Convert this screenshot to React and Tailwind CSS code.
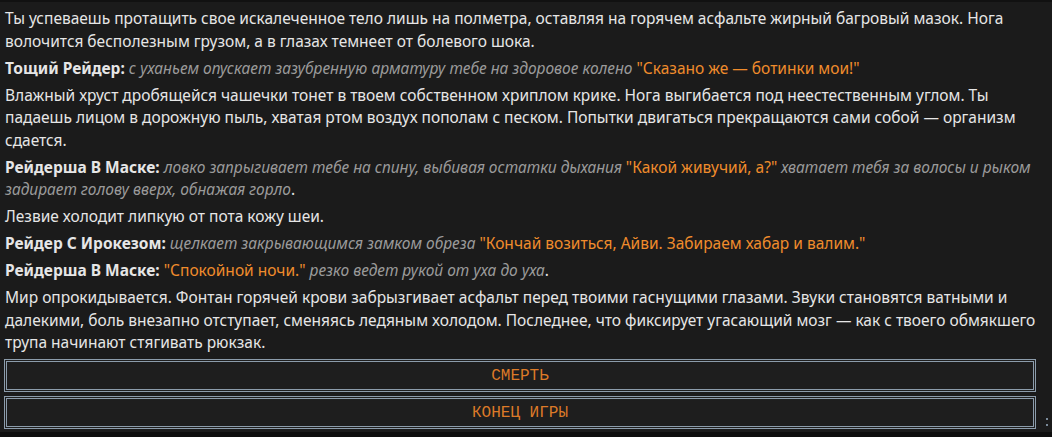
const paragraphs = [
  {
    text: 'Ты успеваешь протащить свое искалеченное тело лишь на полметра, оставляя на горячем асфальте жирный багровый мазок. Нога волочится бесполезным грузом, а в глазах темнеет от болевого шока.',
  },
  {
    who: 'Тощий Рейдер:',
    action: 'с уханьем опускает зазубренную арматуру тебе на здоровое колено',
    quote: '"Сказано же — ботинки мои!"',
  },
  {
    text: 'Влажный хруст дробящейся чашечки тонет в твоем собственном хриплом крике. Нога выгибается под неестественным углом. Ты падаешь лицом в дорожную пыль, хватая ртом воздух пополам с песком. Попытки двигаться прекращаются сами собой — организм сдается.',
  },
  {
    who: 'Рейдерша В Маске:',
    action: 'ловко запрыгивает тебе на спину, выбивая остатки дыхания',
    quote: '"Какой живучий, а?"',
    after: 'хватает тебя за волосы и рыком задирает голову вверх, обнажая горло',
    end: '.',
  },
  { text: 'Лезвие холодит липкую от пота кожу шеи.' },
  {
    who: 'Рейдер С Ирокезом:',
    action: 'щелкает закрывающимся замком обреза',
    quote: '"Кончай возиться, Айви. Забираем хабар и валим."',
  },
  {
    who: 'Рейдерша В Маске:',
    quote: '"Спокойной ночи."',
    after: 'резко ведет рукой от уха до уха',
    end: '.',
  },
  {
    text: 'Мир опрокидывается. Фонтан горячей крови забрызгивает асфальт перед твоими гаснущими глазами. Звуки становятся ватными и далекими, боль внезапно отступает, сменяясь ледяным холодом. Последнее, что фиксирует угасающий мозг — как с твоего обмякшего трупа начинают стягивать рюкзак.',
  },
];

function Line({ p }) {
  if (p.text) return <p className="mb-[4.5px]">{p.text}</p>;
  return (
    <p className="mb-[4.5px]">
      <b className="font-bold">{p.who}</b>{' '}
      {p.action && <i className="italic text-[#9a9a9a]">{p.action} </i>}
      <span className="text-[#f08c2c]">{p.quote}</span>
      {p.after && <i className="italic text-[#9a9a9a]"> {p.after}</i>}
      {p.end}
    </p>
  );
}

export default function App() {
  return (
    <div className="h-[437px] w-[1052px] overflow-hidden bg-[#0e0e0e]">
      <div className="relative h-[432px] border-t-2 border-[#111111] bg-[#1b1b1b]">
        <div
          className="pl-[5px] pr-[6px] pt-[5px] text-[15.5px] leading-[22.5px] text-[#e6e6e6]"
          style={{ fontFamily: '"Noto Sans", "Open Sans", sans-serif' }}
        >
          {paragraphs.map((p, i) => (
            <Line key={i} p={p} />
          ))}
        </div>
        <div className="flex flex-col gap-[4px] pl-[4px] pr-[16px] pt-[1px]">
          {['СМЕРТЬ', 'КОНЕЦ ИГРЫ'].map((label) => (
            <button
              key={label}
              className="h-[33px] w-full border-[3px] border-double border-[#8c9cab] bg-[#1e1e1e] text-[16px] text-[#dc7a28]"
              style={{ fontFamily: '"Liberation Mono", monospace' }}
            >
              {label}
            </button>
          ))}
        </div>
        <div className="absolute right-[4px] bottom-[6px] flex flex-col gap-[4px]">
          <span className="h-[2px] w-[2px] bg-[#7a8a99]" />
          <span className="h-[2px] w-[2px] bg-[#7a8a99]" />
        </div>
      </div>
    </div>
  );
}
